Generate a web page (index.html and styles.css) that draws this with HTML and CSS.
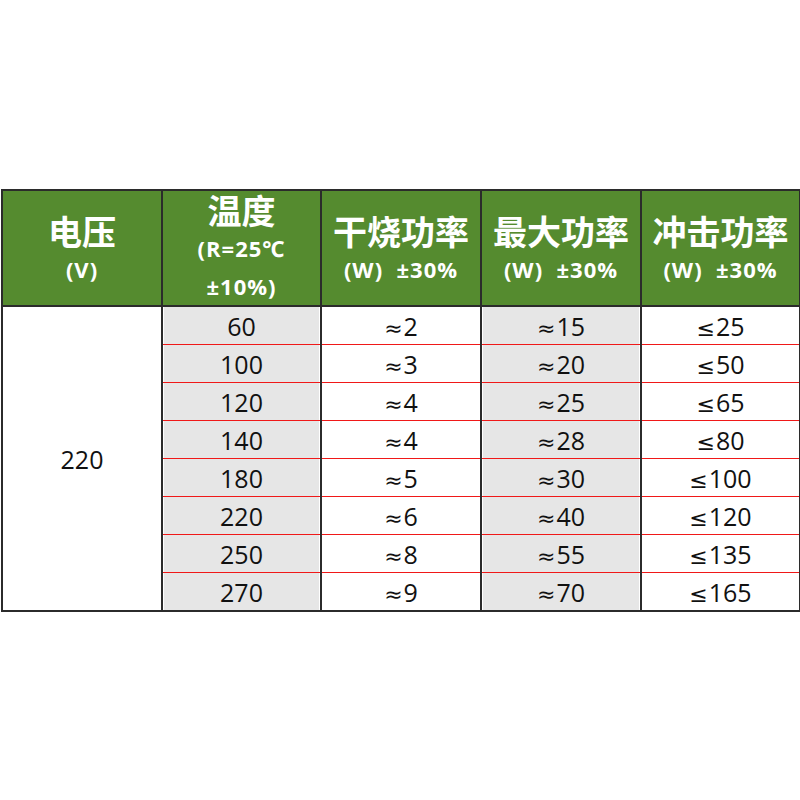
FILE: index.html
```html
<!DOCTYPE html>
<html lang="zh">
<head>
<meta charset="utf-8">
<link rel="stylesheet" href="styles.css">
</head>
<body>
<div class="wrap">
<table class="spec">
  <colgroup>
    <col class="c1"><col class="c2"><col class="c3"><col class="c4"><col class="c5">
  </colgroup>
  <thead>
    <tr>
      <th><div class="t">电压</div><div class="s">(V)</div></th>
      <th class="h2"><div class="t">温度</div><div class="s">(R=25℃</div><div class="s">±10%)</div></th>
      <th><div class="t">干烧功率</div><div class="s">(W)  ±30%</div></th>
      <th><div class="t">最大功率</div><div class="s">(W)  ±30%</div></th>
      <th><div class="t">冲击功率</div><div class="s">(W)  ±30%</div></th>
    </tr>
  </thead>
  <tbody>
    <tr><td class="volt" rowspan="8">220</td><td class="g">60</td><td><span class="sym">≈</span>2</td><td class="g"><span class="sym">≈</span>15</td><td><span class="sym">≤</span>25</td></tr>
    <tr><td class="g">100</td><td><span class="sym">≈</span>3</td><td class="g"><span class="sym">≈</span>20</td><td><span class="sym">≤</span>50</td></tr>
    <tr><td class="g">120</td><td><span class="sym">≈</span>4</td><td class="g"><span class="sym">≈</span>25</td><td><span class="sym">≤</span>65</td></tr>
    <tr><td class="g">140</td><td><span class="sym">≈</span>4</td><td class="g"><span class="sym">≈</span>28</td><td><span class="sym">≤</span>80</td></tr>
    <tr><td class="g">180</td><td><span class="sym">≈</span>5</td><td class="g"><span class="sym">≈</span>30</td><td><span class="sym">≤</span>100</td></tr>
    <tr><td class="g">220</td><td><span class="sym">≈</span>6</td><td class="g"><span class="sym">≈</span>40</td><td><span class="sym">≤</span>120</td></tr>
    <tr><td class="g">250</td><td><span class="sym">≈</span>8</td><td class="g"><span class="sym">≈</span>55</td><td><span class="sym">≤</span>135</td></tr>
    <tr><td class="g">270</td><td><span class="sym">≈</span>9</td><td class="g"><span class="sym">≈</span>70</td><td><span class="sym">≤</span>165</td></tr>
  </tbody>
</table>
</div>
</body>
</html>
```

FILE: styles.css
```css
html, body {
  margin: 0;
  padding: 0;
  background: #fff;
}
.wrap {
  padding: 189px 1px 0 1px;
}
.spec {
  border-collapse: collapse;
  width: 798px;
  table-layout: fixed;
  font-family: "Open Sans", "Noto Sans", "Noto Sans CJK SC", sans-serif;
  color: #111;
}
.c1 { width: 160px; }
.c2 { width: 159px; }
.c3 { width: 160px; }
.c4 { width: 160px; }
.c5 { width: 159px; }
.spec th {
  background: #558b2f;
  color: #fff;
  font-weight: bold;
  height: 112px;
  padding: 0;
  border: 2px solid #2b2b2b;
  vertical-align: middle;
  text-align: center;
}
.spec th .t {
  font-size: 34px;
  line-height: 38px;
  font-family: "Noto Sans CJK SC", "Noto Sans", sans-serif;
}
.spec th .s {
  font-size: 22px;
  line-height: 38px;
  letter-spacing: 1px;
  white-space: pre;
}
.spec th > div:first-child { margin-top: 4px; }
.spec th.h2 > div:first-child { margin-top: 0; }
.spec td {
  height: 37px;
  padding: 0;
  font-size: 25px;
  line-height: 30px;
  text-align: center;
  vertical-align: middle;
  border-left: 2px solid #2b2b2b;
  border-right: 2px solid #2b2b2b;
  border-top: 1px solid #f01818;
  border-bottom: 1px solid #f01818;
  background: #fff;
}
.spec td .sym {
  font-family: "DejaVu Sans", sans-serif;
  font-size: 22px;
  line-height: 1;
  margin-right: 1px;
}
.spec tbody tr:first-child td { border-top: 2px solid #2b2b2b; }
.spec tbody tr:last-child td { border-bottom: 2px solid #2b2b2b; }
.spec td.volt {
  border-bottom: 2px solid #2b2b2b;
}
.spec td.g {
  background: #e6e6e6;
  box-shadow: inset 1px 0 0 #fff, inset -1px 0 0 #fff;
}
```
